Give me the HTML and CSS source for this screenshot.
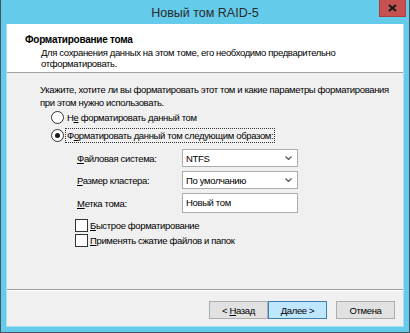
FILE: index.html
```html
<!DOCTYPE html>
<html lang="ru">
<head>
    <meta charset="UTF-8">
    <title>Новый том RAID-5</title>
    <link rel="stylesheet" href="styles.css">
</head>
<body>

    <div class="window">
        <!-- Title bar -->
        <div class="titlebar">
            <span class="title">Новый том RAID-5</span>
            <div class="close-btn">
                <svg width="9" height="8" viewBox="0 0 9 8">
                    <path d="M1 1 L8 7 M8 1 L1 7" stroke="#1a1a1a" stroke-width="2"/>
                </svg>
            </div>
        </div>

        <div class="client">
            <!-- Wizard header -->
            <div class="wizard-header">
                <div class="header-title">Форматирование тома</div>
                <div class="header-text">Для сохранения данных на этом томе, его необходимо предварительно отформатировать.</div>
            </div>

            <div class="wizard-body">
                <p class="intro">Укажите, хотите ли вы форматировать этот том и какие параметры форматирования при этом нужно использовать.</p>

                <div class="radio-row">
                    <span class="radio"></span>
                    <span class="radio-label">Н<u>е</u> форматировать данный том</span>
                </div>
                <div class="radio-row">
                    <span class="radio checked"></span>
                    <span class="radio-label focused">Ф<u>о</u>рматировать данный том следующим образом:</span>
                </div>

                <div class="fields">
                    <span class="field-label"><u>Ф</u>айловая система:</span>
                    <div class="select">
                        <span>NTFS</span>
                        <svg class="chevron" width="7" height="4" viewBox="0 0 7 4"><path d="M0.5 0.5 L3.5 3.5 L6.5 0.5" fill="none" stroke="#555" stroke-width="1.2"/></svg>
                    </div>

                    <span class="field-label"><u>Р</u>азмер кластера:</span>
                    <div class="select">
                        <span>По умолчанию</span>
                        <svg class="chevron" width="7" height="4" viewBox="0 0 7 4"><path d="M0.5 0.5 L3.5 3.5 L6.5 0.5" fill="none" stroke="#555" stroke-width="1.2"/></svg>
                    </div>

                    <span class="field-label"><u>М</u>етка тома:</span>
                    <div class="text-input">Новый том</div>
                </div>

                <div class="checks">
                    <div class="check-row">
                        <span class="checkbox"></span>
                        <span><u>Б</u>ыстрое форматирование</span>
                    </div>
                    <div class="check-row">
                        <span class="checkbox"></span>
                        <span><u>П</u>рименять сжатие файлов и папок</span>
                    </div>
                </div>
            </div>

            <!-- Buttons -->
            <div class="wizard-footer">
                <div class="btn"><span>&lt; <u>Н</u>азад</span></div>
                <div class="btn default"><span><u>Д</u>алее &gt;</span></div>
                <div class="btn cancel"><span>Отмена</span></div>
            </div>
        </div>
    </div>

</body>
</html>
```

FILE: styles.css
```css
* {
    margin: 0;
    padding: 0;
    box-sizing: border-box;
}

body {
    font-family: 'Liberation Sans', Arial, sans-serif;
    font-size: 9.5px;
    letter-spacing: -0.35px;
    color: #000;
    background-color: #fff;
}

u {
    text-decoration: underline;
    text-underline-offset: 1px;
}

.window {
    width: 410px;
    height: 333px;
    background-color: #65cbea;
    border: 1px solid #46555c;
    border-top: none;
    display: flex;
    flex-direction: column;
}

.titlebar {
    height: 24px;
    display: flex;
    justify-content: center;
    align-items: center;
    position: relative;
}

.title {
    font-size: 12.5px;
    letter-spacing: 0;
    color: #2a2a2a;
    padding-top: 1px;
}

.close-btn {
    position: absolute;
    top: 0;
    right: 3px;
    width: 27px;
    height: 17px;
    background-color: #c75050;
    border: 1px solid #a64040;
    border-top: none;
    display: flex;
    justify-content: center;
    align-items: center;
}

.client {
    flex: 1;
    margin: 0 5px 5px 5px;
    border: 1px solid #a9e0f2;
    border-top: none;
    background-color: #f0f0f0;
    display: flex;
    flex-direction: column;
}

.wizard-header {
    height: 49px;
    background-color: #fff;
    border-bottom: 1px solid #a0a0a0;
    padding: 9px 0 0 18px;
}

.header-title {
    font-size: 10px;
    letter-spacing: -0.25px;
    font-weight: bold;
    line-height: 13px;
}

.header-text {
    padding-left: 16px;
    padding-right: 40px;
    line-height: 11px;
    margin-top: 1px;
}

.wizard-body {
    flex: 1;
    padding: 10px 0 0 33px;
}

.intro {
    line-height: 13px;
    margin-bottom: 1px;
}

.radio-row {
    display: flex;
    align-items: center;
    height: 15px;
    margin-left: 11px;
    margin-bottom: 3px;
}

.radio {
    width: 13px;
    height: 13px;
    border: 1px solid #333;
    border-radius: 50%;
    background-color: #fff;
    margin-right: 1px;
    display: flex;
    justify-content: center;
    align-items: center;
}

.radio.checked::after {
    content: '';
    width: 5px;
    height: 5px;
    border-radius: 50%;
    background-color: #1a1a1a;
}

.radio-label {
    padding: 1px 1px;
    border: 1px dotted transparent;
}

.radio-label.focused {
    border-color: #333;
}

.fields {
    display: grid;
    grid-template-columns: 105px 116px;
    row-gap: 4px;
    align-items: center;
    margin: 6px 0 0 37px;
}

.select {
    height: 18px;
    background-color: #fff;
    border: 1px solid #acacac;
    display: flex;
    align-items: center;
    justify-content: space-between;
    padding: 0 5px 0 3px;
}

.chevron {
    display: block;
}

.text-input {
    height: 20px;
    background-color: #fff;
    border: 1px solid #acacac;
    padding: 2px 3px;
    line-height: 13px;
}

.checks {
    margin: 6px 0 0 35px;
}

.check-row {
    display: flex;
    align-items: center;
    height: 13px;
    margin-bottom: 2px;
}

.checkbox {
    width: 13px;
    height: 13px;
    border: 1px solid #333;
    background-color: #fff;
    margin-right: 2px;
}

.wizard-footer {
    height: 37px;
    border-top: 1px solid #a0a0a0;
    box-shadow: inset 0 1px 0 #fff;
    display: flex;
    justify-content: flex-end;
    padding: 11px 8px 0 0;
}

.btn {
    width: 59px;
    height: 18px;
    background-color: #e1e1e1;
    border: 1px solid #adadad;
    display: flex;
    justify-content: center;
    align-items: center;
    color: #000;
}

.btn.default {
    background-color: #bee6fd;
    border-color: #3c7fb1;
}

.btn.cancel {
    margin-left: 9px;
}
```
